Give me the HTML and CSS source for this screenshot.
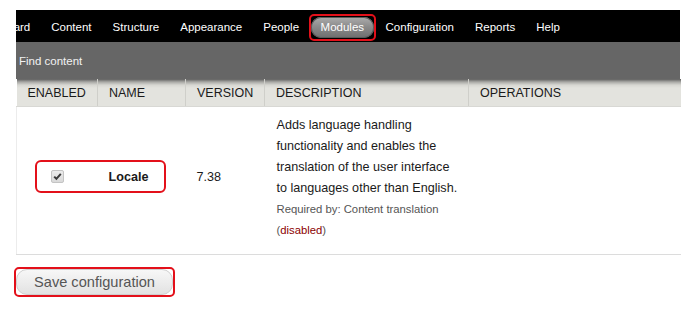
FILE: index.html
```html
<!DOCTYPE html>
<html lang="en">
<head>
    <meta charset="UTF-8">
    <meta name="viewport" content="width=device-width, initial-scale=1.0">
    <title>Modules</title>
    <link rel="stylesheet" href="styles.css">
</head>
<body>

<div class="page">
    <nav class="toolbar">
        <a href="#" class="toolbar-link toolbar-first">Dashboard</a>
        <a href="#" class="toolbar-link">Content</a>
        <a href="#" class="toolbar-link">Structure</a>
        <a href="#" class="toolbar-link">Appearance</a>
        <a href="#" class="toolbar-link">People</a>
        <a href="#" class="toolbar-link active"><span class="pill">Modules</span></a>
        <a href="#" class="toolbar-link">Configuration</a>
        <a href="#" class="toolbar-link">Reports</a>
        <a href="#" class="toolbar-link">Help</a>
    </nav>

    <div class="shortcuts">
        <a href="#" class="shortcut-link">Find content</a>
    </div>

    <div class="content">
        <table class="modules">
            <colgroup>
                <col class="col-enabled">
                <col class="col-name">
                <col class="col-version">
                <col class="col-description">
                <col class="col-operations">
            </colgroup>
            <thead>
                <tr>
                    <th>Enabled</th>
                    <th>Name</th>
                    <th>Version</th>
                    <th>Description</th>
                    <th>Operations</th>
                </tr>
            </thead>
            <tbody>
                <tr>
                    <td class="checkbox-cell">
                        <span class="checkbox" role="checkbox" aria-checked="true" aria-disabled="true">
                            <svg width="11" height="11" viewBox="0 0 11 11"><path d="M2.2 5.6 L4.4 7.8 L8.8 2.8" fill="none" stroke="#3a3a3a" stroke-width="2"/></svg>
                        </span>
                    </td>
                    <td class="name-cell">Locale</td>
                    <td>7.38</td>
                    <td class="description-cell">
                        <div class="description">Adds language handling functionality and enables the translation of the user interface to languages other than English.</div>
                        <div class="requirements">Required by: Content translation</div>
                        <div class="requirements">(<span class="status-disabled">disabled</span>)</div>
                    </td>
                    <td></td>
                </tr>
            </tbody>
        </table>

        <!-- Highlight drawn over the checkbox and name -->
        <span class="callout callout-locale"></span>

        <div class="form-actions">
            <span class="callout-wrap">
                <button class="form-submit" type="button">Save configuration</button>
            </span>
        </div>
    </div>
</div>

</body>
</html>
```

FILE: styles.css
```css
body {
    margin: 0;
    font-family: "Liberation Sans", Arial, sans-serif;
    background-color: #fff;
    color: #000;
}

.page {
    width: 664px;
    padding: 10px 0 0 16px;
}

.toolbar {
    display: flex;
    align-items: center;
    height: 32px;
    background-color: #000;
    overflow: hidden;
}

.toolbar-link {
    flex: none;
    padding: 0 10.5px;
    color: #fff;
    font-size: 11.5px;
    text-decoration: none;
    line-height: 32px;
    position: relative;
    top: 1px;
}

.toolbar-first {
    padding-left: 0;
    margin-left: -42px;
}

.toolbar-link.active {
    padding: 0 1px;
}

.pill {
    position: relative;
    display: inline-block;
    padding: 0 10px;
    height: 21px;
    line-height: 21px;
    border-radius: 10px;
    color: #fff;
    background: linear-gradient(to bottom, #acacac 0%, #8c8c8c 45%, #6e6e6e 100%);
    box-shadow: inset 0 0 0 1px #5a5a5a;
    vertical-align: middle;
}

/* Red annotation around the active tab */
.pill::after {
    content: "";
    position: absolute;
    top: -3px;
    bottom: -3px;
    left: -2px;
    right: -2px;
    border: 2px solid #e3101a;
    border-radius: 5px;
}

.shortcuts {
    height: 37px;
    display: flex;
    align-items: center;
    background-color: #666;
    padding-left: 3px;
}

.shortcut-link {
    color: #f2f2f2;
    font-size: 11.5px;
    text-decoration: none;
}

.content {
    position: relative;
}

.modules {
    width: 664px;
    border-collapse: collapse;
    table-layout: fixed;
}

.col-enabled { width: 81px; }
.col-name { width: 88px; }
.col-version { width: 79px; }
.col-description { width: 204px; }
.col-operations { width: 212px; }

.modules th {
    height: 27px;
    padding: 1px 10px 0 11px;
    text-align: left;
    font-weight: normal;
    font-size: 12.5px;
    text-transform: uppercase;
    color: #1a1a1a;
    background: linear-gradient(to bottom, #5e5e5e 0px, #a9a9a6 3px, #d6d6d1 6px, #e3e3de 9px, #e3e3de 100%);
    border-left: 1px solid #cfcfca;
    border-bottom: 1px solid #d8d8d4;
    box-sizing: border-box;
}

.modules th:first-child {
    border-left: none;
}

.modules td {
    padding: 8px 11px 13px;
    vertical-align: middle;
    font-size: 12.6px;
    line-height: 21px;
    color: #1a1a1a;
    border-bottom: 1px solid #dcdcdc;
}

.modules td:first-child {
    border-left: 1px solid #ececec;
}

.checkbox-cell {
    text-align: center;
}

.checkbox {
    display: inline-flex;
    align-items: center;
    justify-content: center;
    width: 13px;
    height: 13px;
    box-sizing: border-box;
    border: 1px solid #c4c4c4;
    border-radius: 2px;
    background: linear-gradient(to bottom, #ececec, #d9d9d9);
    vertical-align: middle;
    position: relative;
    top: -1px;
}

.name-cell {
    font-weight: bold;
}

.modules .description-cell {
    padding: 8px 8px 13px 12px;
}

.requirements {
    font-size: 11.3px;
    color: #555;
}

.status-disabled {
    color: #8b0000;
}

/* Red annotation around the checkbox and module name */
.callout {
    position: absolute;
    box-sizing: border-box;
    border: 2px solid #e3101a;
    border-radius: 6px;
}

.callout-locale {
    left: 19px;
    top: 81px;
    width: 131px;
    height: 33px;
}

.form-actions {
    padding-top: 12px;
}

.callout-wrap {
    display: inline-block;
    margin-left: -2px;
    padding: 0;
    border: 2px solid #e3101a;
    border-radius: 5px;
}

.form-submit {
    display: block;
    margin: 0;
    width: 157px;
    height: 26px;
    padding: 0;
    font-family: "Liberation Sans", Arial, sans-serif;
    font-size: 14.6px;
    color: #555;
    background: linear-gradient(to bottom, #f7f7f7, #e2e2e2);
    border: 1px solid #cfcfcf;
    border-radius: 11px;
    cursor: pointer;
}
```
